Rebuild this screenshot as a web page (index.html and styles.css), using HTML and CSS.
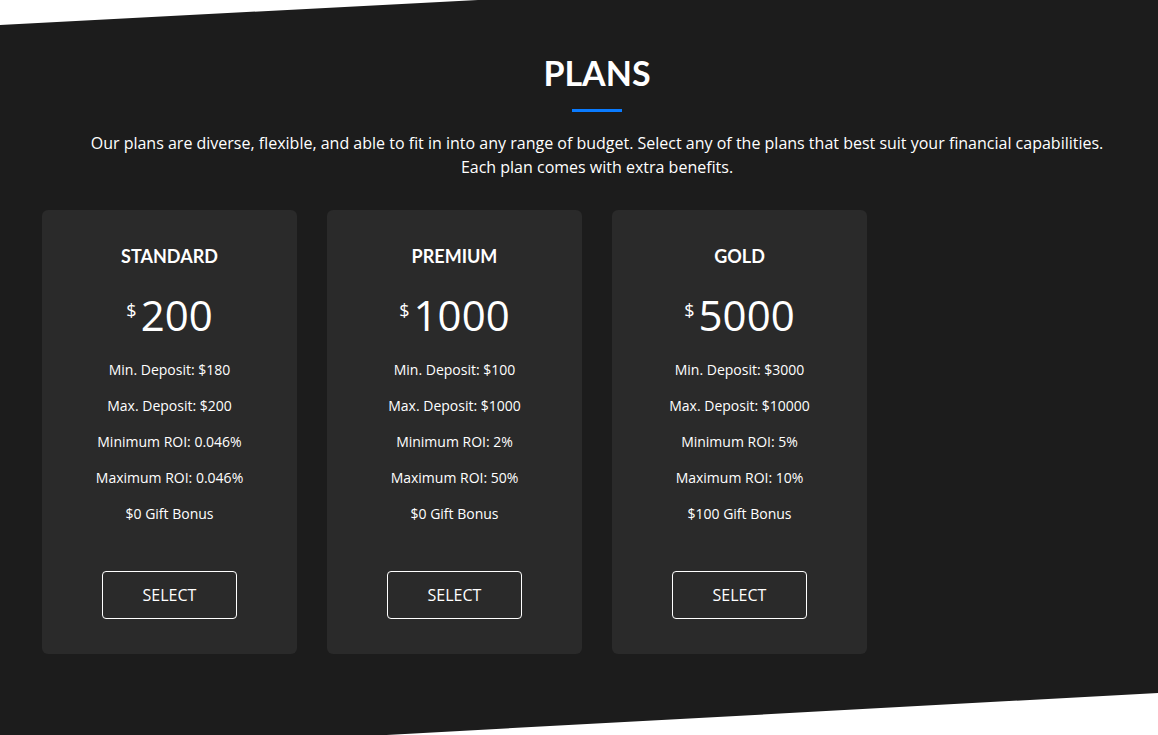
FILE: index.html
```html
<!DOCTYPE html>
<html lang="en">
<head>
  <meta charset="UTF-8" />
  <meta name="viewport" content="width=device-width, initial-scale=1.0"/>
  <title>Plans</title>

  <link rel="stylesheet" href="styles.css">
</head>

<body>
  <section class="plans">
    <div class="container">
      <h2 class="section-title">PLANS</h2>
      <div class="divider"></div>
      <p class="lead">
        Our plans are diverse, flexible, and able to fit in into any range of budget. Select any of the plans that best suit your financial capabilities.<br>
        Each plan comes with extra benefits.
      </p>

      <div class="plan-grid">
        <div class="plan-card">
          <h3 class="plan-name">STANDARD</h3>
          <div class="plan-price"><span class="currency">$</span>200</div>
          <ul class="plan-features">
            <li>Min. Deposit: $180</li>
            <li>Max. Deposit: $200</li>
            <li>Minimum ROI: 0.046%</li>
            <li>Maximum ROI: 0.046%</li>
            <li>$0 Gift Bonus</li>
          </ul>
          <button class="btn-select">SELECT</button>
        </div>

        <div class="plan-card">
          <h3 class="plan-name">PREMIUM</h3>
          <div class="plan-price"><span class="currency">$</span>1000</div>
          <ul class="plan-features">
            <li>Min. Deposit: $100</li>
            <li>Max. Deposit: $1000</li>
            <li>Minimum ROI: 2%</li>
            <li>Maximum ROI: 50%</li>
            <li>$0 Gift Bonus</li>
          </ul>
          <button class="btn-select">SELECT</button>
        </div>

        <div class="plan-card">
          <h3 class="plan-name">GOLD</h3>
          <div class="plan-price"><span class="currency">$</span>5000</div>
          <ul class="plan-features">
            <li>Min. Deposit: $3000</li>
            <li>Max. Deposit: $10000</li>
            <li>Minimum ROI: 5%</li>
            <li>Maximum ROI: 10%</li>
            <li>$100 Gift Bonus</li>
          </ul>
          <button class="btn-select">SELECT</button>
        </div>
      </div>
    </div>
  </section>
</body>
</html>
```

FILE: styles.css
```css
body {
  font-family: 'Open Sans', 'Liberation Sans', sans-serif;
  background: #ffffff;
  color: white;
  margin: 0;
  padding: 0;
  overflow: hidden;
}

/* Dark slanted section */
.plans {
  background-color: #1c1c1c;
  height: 756px;
  clip-path: polygon(0 25px, 478px 0, 100% 0, 100% 693px, 0 756px);
}

.container {
  padding: 51px 6px 0 42px;
}

.section-title {
  margin: 0;
  text-align: center;
  font-family: Lato, 'Open Sans', sans-serif;
  font-size: 34px;
  line-height: 44px;
  font-weight: 700;
}

.divider {
  width: 50px;
  height: 3px;
  background-color: #0a7bff;
  margin: 14px auto 0;
}

.lead {
  margin: 19px 0 0;
  text-align: center;
  font-size: 16px;
  line-height: 24px;
}

.plan-grid {
  display: grid;
  grid-template-columns: repeat(4, 1fr);
  gap: 30px;
  margin-top: 31px;
}

.plan-card {
  background-color: #2a2a2a;
  border-radius: 6px;
  height: 444px;
  padding-top: 34px;
  box-sizing: border-box;
  display: flex;
  flex-direction: column;
  align-items: center;
  text-align: center;
}

.plan-name {
  margin: 0;
  font-family: Lato, 'Open Sans', sans-serif;
  font-size: 18px;
  line-height: 24px;
  font-weight: 700;
}

.plan-price {
  margin-top: 19px;
  font-size: 42px;
  line-height: 56px;
  font-weight: 400;
}

.currency {
  font-size: 18px;
  vertical-align: top;
  position: relative;
  top: -5px;
  margin-right: 4px;
}

.plan-features {
  list-style: none;
  margin: 17px 0 0;
  padding: 0;
  font-size: 14px;
  line-height: 20px;
}

.plan-features li {
  margin-bottom: 16px;
}

.btn-select {
  margin-top: 31px;
  width: 135px;
  height: 48px;
  background: transparent;
  color: white;
  border: 1px solid #ffffff;
  border-radius: 4px;
  font-family: 'Open Sans', 'Liberation Sans', sans-serif;
  font-size: 16px;
  line-height: 44px;
  cursor: pointer;
}
```
